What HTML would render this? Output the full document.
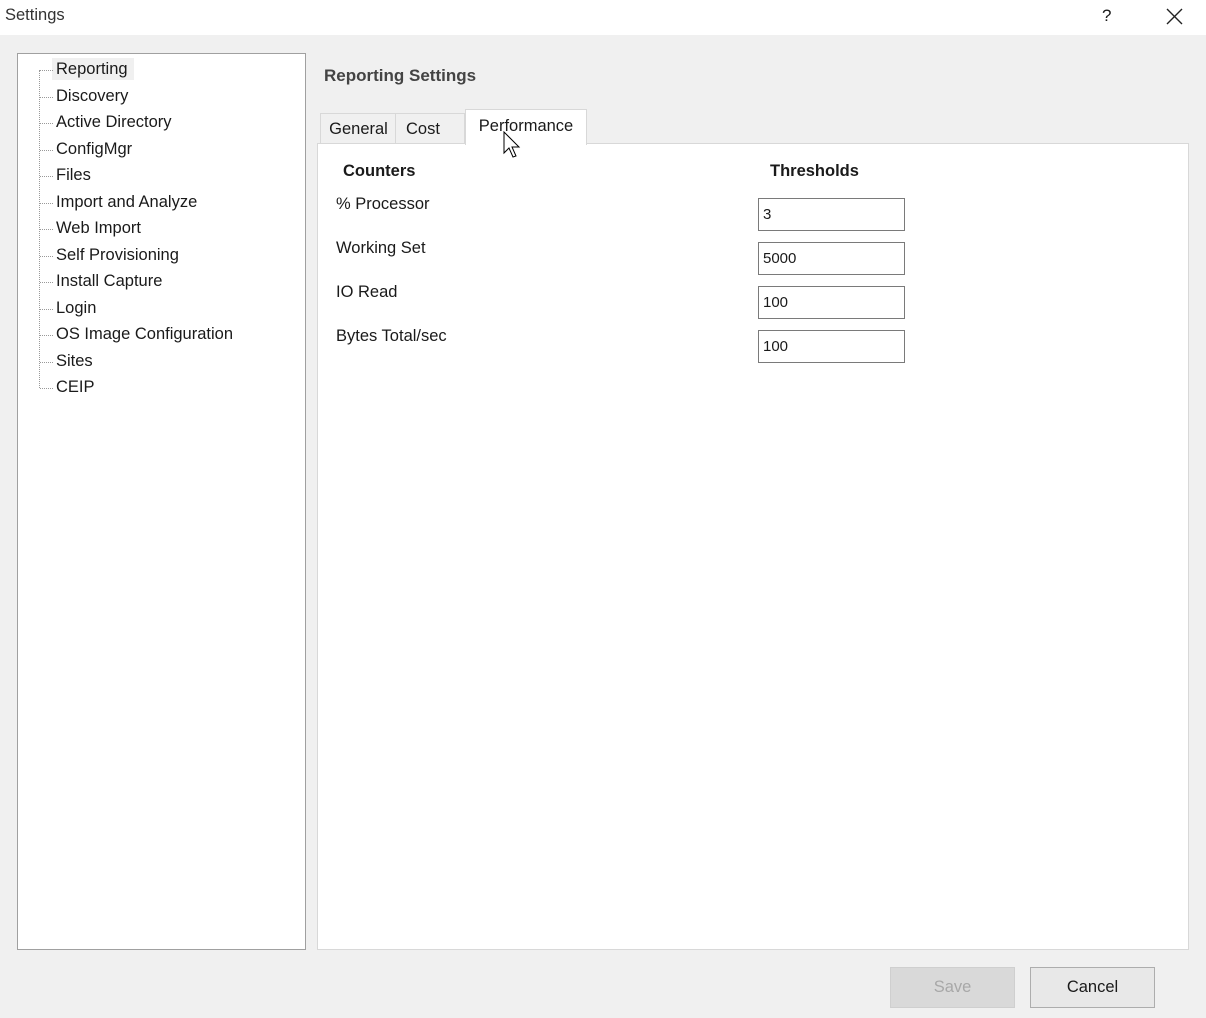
<!DOCTYPE html>
<html><head><style>
body{margin:0;width:1206px;height:1018px;background:#f0f0f0;font-family:"Liberation Sans",sans-serif;position:relative;overflow:hidden;color:#1a1a1a}
.a{position:absolute}
#title{left:0;top:0;width:1206px;height:35px;background:#fff}
#tree{left:17px;top:53px;width:287px;height:895px;background:#fff;border:1px solid #a0a0a0}
.it{position:absolute;left:56px;font-size:16.5px;line-height:20px}
.dl{position:absolute;left:40px;width:13px;border-top:1px dotted #999}
#vl{left:39px;top:70px;height:318px;border-left:1px dotted #999}
#panel{left:317px;top:143px;width:870px;height:805px;background:#fff;border:1px solid #d8d8d8}
.tab{position:absolute;top:113px;height:29px;background:#f0f0f0;border:1px solid #d8d8d8;border-bottom:none;font-size:16.5px;line-height:30px;text-align:center}
.in{position:absolute;left:758px;width:145px;height:31px;border:1px solid #7a7a7a;background:#fff;font-size:15px;line-height:31px;padding-left:4px;box-sizing:border-box;width:147px;height:33px}
.lb{position:absolute;left:336px;font-size:16.5px}
.btn{position:absolute;top:967px;width:123px;height:39px;border:1px solid #adadad;font-size:16.5px;line-height:39px;text-align:center}
</style></head><body>
<div class="a" id="title"></div>
<div class="a" style="left:5px;top:6px;font-size:16.5px;color:#333">Settings</div>
<div class="a" style="left:1102px;top:6px;font-size:17px">?</div>
<svg class="a" style="left:1166px;top:8px" width="17" height="17"><path d="M1 1L16 16M16 1L1 16" stroke="#222" stroke-width="1.4"/></svg>
<div class="a" id="tree"></div>
<div class="a" id="vl"></div>
<div class="a" style="left:52px;top:58px;width:82px;height:22px;background:#f0f0f0"></div>
<div class="it" style="top:59px">Reporting</div>
<div class="it" style="top:86px">Discovery</div>
<div class="it" style="top:112px">Active Directory</div>
<div class="it" style="top:139px">ConfigMgr</div>
<div class="it" style="top:165px">Files</div>
<div class="it" style="top:192px">Import and Analyze</div>
<div class="it" style="top:218px">Web Import</div>
<div class="it" style="top:245px">Self Provisioning</div>
<div class="it" style="top:271px">Install Capture</div>
<div class="it" style="top:298px">Login</div>
<div class="it" style="top:324px">OS Image Configuration</div>
<div class="it" style="top:351px">Sites</div>
<div class="it" style="top:377px">CEIP</div>
<div class="dl" style="top:70px"></div><div class="dl" style="top:97px"></div><div class="dl" style="top:123px"></div><div class="dl" style="top:150px"></div><div class="dl" style="top:176px"></div><div class="dl" style="top:203px"></div><div class="dl" style="top:229px"></div><div class="dl" style="top:256px"></div><div class="dl" style="top:282px"></div><div class="dl" style="top:309px"></div><div class="dl" style="top:335px"></div><div class="dl" style="top:362px"></div><div class="dl" style="top:388px"></div>
<div class="a" style="left:324px;top:66px;font-size:17px;font-weight:bold;color:#444">Reporting Settings</div>
<div class="a" id="panel"></div>
<div class="tab" style="left:320px;width:75px">General</div>
<div class="tab" style="left:395px;width:68px;text-align:left;padding-left:0"> <span style="margin-left:10px">Cost</span></div>
<div class="tab" style="left:465px;top:109px;height:35px;width:120px;background:#fff;line-height:32px">Performance</div>
<svg class="a" style="left:503px;top:131px" width="20" height="28"><path d="M1 1V22L6 17L10 26L13 25L9 16H16Z" fill="#fff" stroke="#000" stroke-width="1"/></svg>
<div class="a" style="left:343px;top:162px;font-size:16.5px;font-weight:bold">Counters</div>
<div class="a" style="left:770px;top:162px;font-size:16.5px;font-weight:bold">Thresholds</div>
<div class="lb" style="top:195px">% Processor</div>
<div class="lb" style="top:239px">Working Set</div>
<div class="lb" style="top:283px">IO Read</div>
<div class="lb" style="top:327px">Bytes Total/sec</div>
<div class="in" style="top:198px">3</div>
<div class="in" style="top:242px">5000</div>
<div class="in" style="top:286px">100</div>
<div class="in" style="top:330px">100</div>
<div class="btn" style="left:890px;background:#d9d9d9;border-color:#cfcfcf;color:#a8a8a8">Save</div>
<div class="btn" style="left:1030px;background:#e8e8e8">Cancel</div>
</body></html>
